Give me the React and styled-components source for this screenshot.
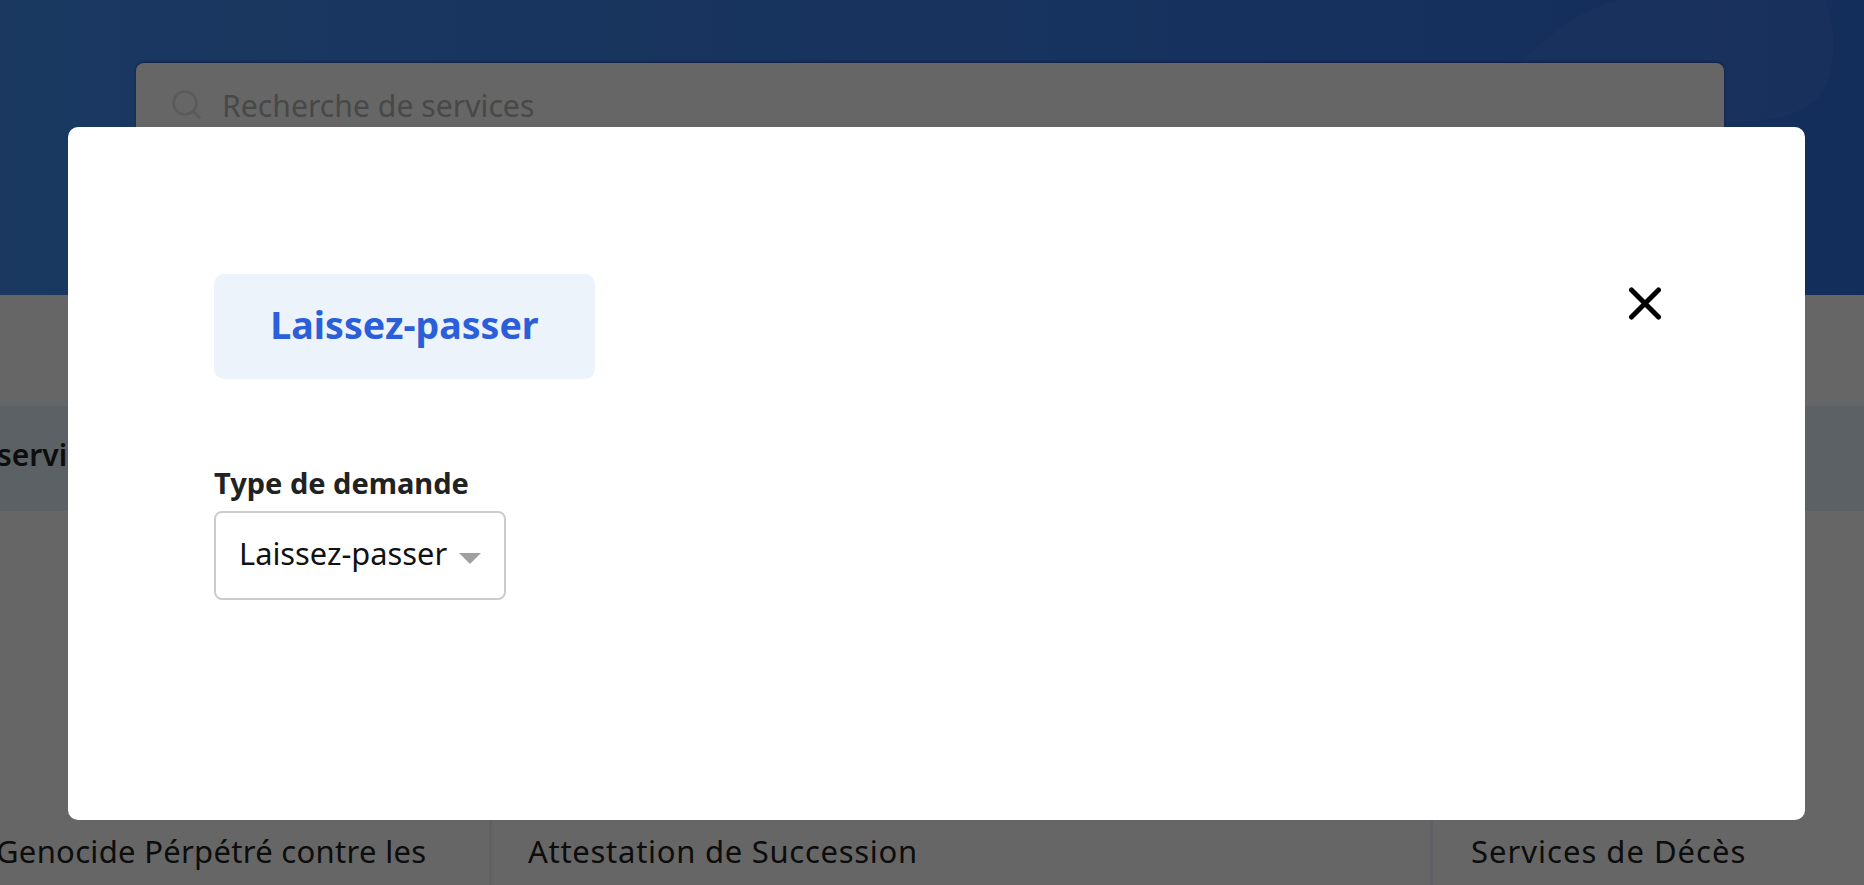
import React from "react";
import styled, { createGlobalStyle } from "styled-components";

const Global = createGlobalStyle`
  html, body {
    margin: 0;
    padding: 0;
    background: #fff;
    overflow: hidden;
    font-family: "Noto Sans", "Open Sans", sans-serif;
  }
  * {
    box-sizing: border-box;
  }
`;

const Page = styled.div`
  width: 1864px;
  height: 885px;
  overflow: hidden;
  color: #222;
`;

const Hero = styled.header`
  position: relative;
  height: 295px;
  padding: 63px 140px 0 136px;
  background: linear-gradient(90deg, #418df0 0%, #3473e6 100%);
  overflow: hidden;
`;

const Blob = styled.svg`
  position: absolute;
  top: 0;
  right: 0;
  width: 400px;
  height: 130px;
`;

const SearchBar = styled.div`
  position: relative;
  display: flex;
  align-items: flex-start;
  gap: 21px;
  height: 160px;
  padding: 27px 35px;
  background: #fff;
  border-radius: 8px;
  box-shadow: 0 -1px 3px rgba(20, 20, 120, 0.5);
`;

const Placeholder = styled.span`
  margin-top: -2px;
  font-size: 30.2px;
  line-height: 36px;
  color: #b4b4b4;
`;

const Strip = styled.div`
  display: flex;
  align-items: center;
  height: 105px;
  margin-top: 111px;
  padding-bottom: 9px;
  background: #e4f2fa;
  font-size: 30px;
  font-weight: 600;
  text-indent: -3px;
  color: #222;
`;

const Cards = styled.div`
  display: grid;
  grid-template-columns: 492px 941px 1fr;
  height: 374px;
`;

const Card = styled.div`
  padding-top: 320px;
  border-right: ${(p) => (p.$last ? "none" : "3px solid #edf0f8")};
`;

const CardTitle = styled.div`
  margin-left: ${(p) => p.$inset}px;
  font-size: 31px;
  line-height: 40px;
  letter-spacing: ${(p) => p.$spacing}px;
  color: #222;
  white-space: nowrap;
`;

const Overlay = styled.div`
  position: fixed;
  inset: 0;
  display: flex;
  padding: 127px 59px 65px 68px;
  background: rgba(0, 0, 0, 0.6);
`;

const Modal = styled.div`
  flex: 1;
  padding: 147px 144px 0 146px;
  background: #fff;
  border-radius: 10px;
`;

const ModalHead = styled.div`
  display: flex;
  justify-content: space-between;
  align-items: flex-start;
`;

const Pill = styled.div`
  display: flex;
  align-items: center;
  justify-content: center;
  width: 381px;
  height: 105px;
  padding-bottom: 4px;
  background: #ecf3fb;
  border-radius: 10px;
  font-size: 37.6px;
  font-weight: 700;
  color: #2b5fd9;
`;

const CloseButton = styled.button`
  display: block;
  width: 32px;
  height: 33px;
  margin-top: 13px;
  padding: 0;
  border: 0;
  background: none;
`;

const Label = styled.label`
  display: block;
  margin: 80px 0 4px;
  font-size: 29px;
  line-height: 48px;
  font-weight: 700;
  color: #222;
`;

const Select = styled.div`
  display: flex;
  align-items: center;
  justify-content: space-between;
  width: 292px;
  height: 89px;
  padding: 0 23px 6px 23px;
  border: 2px solid #ccc;
  border-radius: 8px;
  font-size: 30.8px;
  color: #111;
`;

const Arrow = styled.span`
  width: 0;
  height: 0;
  margin-top: 12px;
  border-left: 11px solid transparent;
  border-right: 11px solid transparent;
  border-top: 11px solid #a0a0a0;
`;

const App = () => {
  return (
    <>
      <Global />
      <Page>
        <Hero>
          <Blob viewBox="0 0 400 130">
            <path
              d="M56 63 C90 30 125 5 158 0 L362 0 C372 30 372 70 358 92 C340 118 300 122 250 122 L56 122 Z"
              fill="#fff"
              fillOpacity="0.05"
            />
          </Blob>
          <SearchBar>
            <svg width="30" height="30" viewBox="0 0 30 30" fill="none" stroke="#e0e0e0" strokeWidth="2.6" strokeLinecap="round">
              <circle cx="14" cy="13" r="11.5" />
              <path d="M22 21 L28.5 27.5" />
            </svg>
            <Placeholder>Recherche de services</Placeholder>
          </SearchBar>
        </Hero>
        <Strip>services</Strip>
        <Cards>
          <Card>
            <CardTitle $inset={-4} $spacing={0.3}>Genocide Pérpétré contre les</CardTitle>
          </Card>
          <Card>
            <CardTitle $inset={36} $spacing={0.72}>Attestation de Succession</CardTitle>
          </Card>
          <Card $last>
            <CardTitle $inset={38} $spacing={1}>Services de Décès</CardTitle>
          </Card>
        </Cards>
      </Page>
      <Overlay>
        <Modal>
          <ModalHead>
            <Pill>Laissez-passer</Pill>
            <CloseButton aria-label="Fermer">
              <svg width="32" height="33" viewBox="0 0 32 33" fill="none" stroke="#000" strokeWidth="5" strokeLinecap="round">
                <path d="M2.5 3 L29.5 30 M29.5 3 L2.5 30" />
              </svg>
            </CloseButton>
          </ModalHead>
          <Label>Type de demande</Label>
          <Select>
            Laissez-passer
            <Arrow />
          </Select>
        </Modal>
      </Overlay>
    </>
  );
};

export default App;
